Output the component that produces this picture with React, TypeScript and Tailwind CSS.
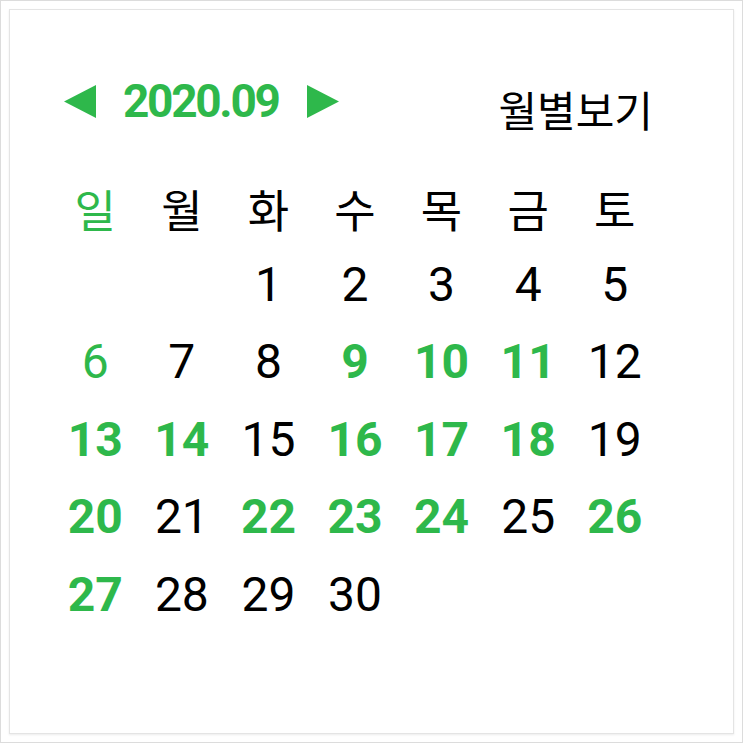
import React from 'react';

const GREEN = 'text-[#2eb84b]';

// s: 0 = plain black, 1 = plain green, 2 = bold green
const days: (null | { d: number; s: number })[] = [
  null, null,
  { d: 1, s: 0 }, { d: 2, s: 0 }, { d: 3, s: 0 }, { d: 4, s: 0 }, { d: 5, s: 0 },
  { d: 6, s: 1 }, { d: 7, s: 0 }, { d: 8, s: 0 }, { d: 9, s: 2 }, { d: 10, s: 2 }, { d: 11, s: 2 }, { d: 12, s: 0 },
  { d: 13, s: 2 }, { d: 14, s: 2 }, { d: 15, s: 0 }, { d: 16, s: 2 }, { d: 17, s: 2 }, { d: 18, s: 2 }, { d: 19, s: 0 },
  { d: 20, s: 2 }, { d: 21, s: 0 }, { d: 22, s: 2 }, { d: 23, s: 2 }, { d: 24, s: 2 }, { d: 25, s: 0 }, { d: 26, s: 2 },
  { d: 27, s: 2 }, { d: 28, s: 0 }, { d: 29, s: 0 }, { d: 30, s: 0 },
];

const weekdays = ['일', '월', '화', '수', '목', '금', '토'];

export default function App() {
  return (
    <div className="w-[743px] h-[743px] bg-white border border-[#dcdcdc] p-[8px]">
      <div className="w-full h-full border border-[#e4e4e4] shadow-[0_1px_2px_rgba(0,0,0,0.08)] bg-white pt-[68px] pl-[54px] pr-[80px]">
        {/* Header */}
        <div className="flex items-start justify-between">
          <div className="flex items-center h-[46px]">
            <svg width="33" height="33" viewBox="0 0 33 33" className="mr-[26px]">
              <polygon points="32,0 32,33 0,16.5" fill="#2eb84b" />
            </svg>
            <span
              className={`${GREEN} font-bold text-[46px] leading-none tracking-[-0.05em]`}
              style={{ fontFamily: 'Roboto, "Liberation Sans", sans-serif' }}
            >
              2020.09
            </span>
            <svg width="33" height="33" viewBox="0 0 33 33" className="ml-[27px]">
              <polygon points="1,0 1,33 33,16.5" fill="#2eb84b" />
            </svg>
          </div>
          <span
            className="text-[42px] font-normal leading-none text-black mt-[10px]"
            style={{ fontFamily: '"Noto Sans CJK KR", sans-serif' }}
          >
            월별보기
          </span>
        </div>

        {/* Calendar grid */}
        <div className="w-[606px] ml-[-12px] mt-[41px]">
          <div className="grid grid-cols-7 h-[75px]">
            {weekdays.map((w, i) => (
              <div
                key={w}
                className={`flex items-center justify-center text-[45px] font-normal leading-none ${i === 0 ? GREEN : 'text-black'}`}
                style={{ fontFamily: '"Noto Sans CJK KR", sans-serif' }}
              >
                {w}
              </div>
            ))}
          </div>
          <div className="grid grid-cols-7 auto-rows-[77.5px]">
            {days.map((c, i) => (
              <div
                key={i}
                className={`flex items-center justify-center text-[48px] leading-none ${
                  c === null ? '' : c.s === 0 ? 'text-black' : c.s === 1 ? GREEN : `${GREEN} font-bold`
                }`}
                style={{ fontFamily: 'Roboto, "Liberation Sans", sans-serif' }}
              >
                {c ? c.d : ''}
              </div>
            ))}
          </div>
        </div>
      </div>
    </div>
  );
}
